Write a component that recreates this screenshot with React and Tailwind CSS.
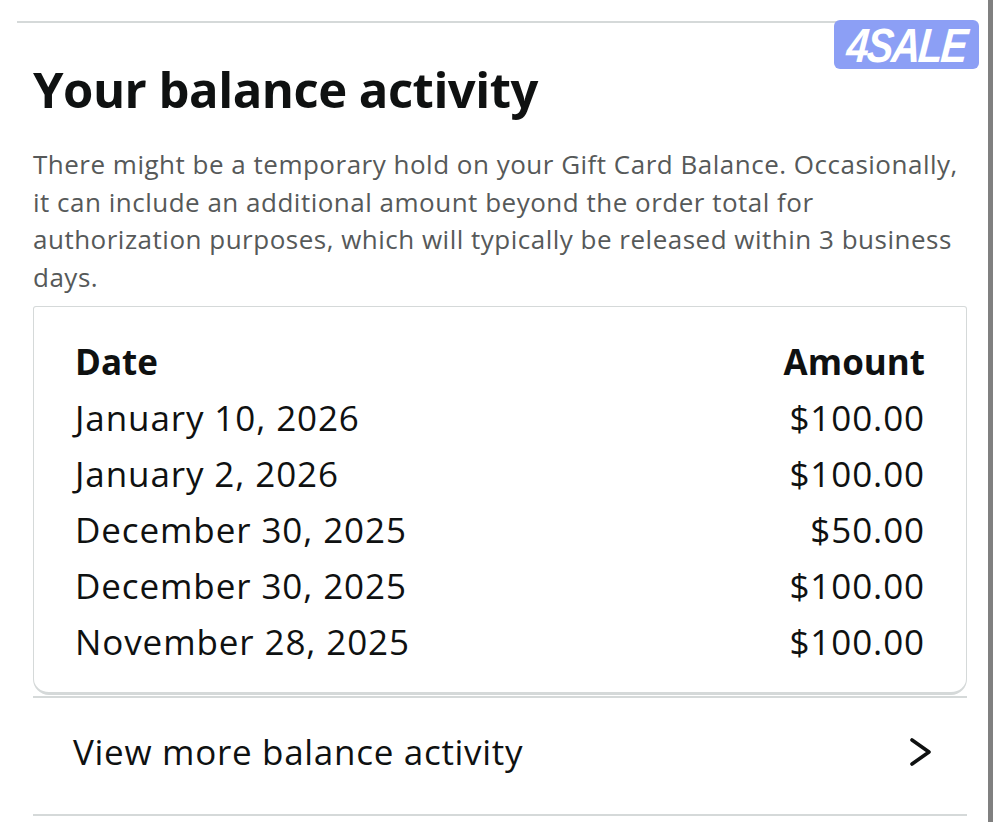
const rows = [
  { date: "January 10, 2026", amount: "$100.00" },
  { date: "January 2, 2026", amount: "$100.00" },
  { date: "December 30, 2025", amount: "$50.00" },
  { date: "December 30, 2025", amount: "$100.00" },
  { date: "November 28, 2025", amount: "$100.00" },
];

function SaleBadge() {
  return (
    <div className="absolute left-[834px] top-[20px] w-[145px] h-[49px] rounded-[6px] bg-[#8c9ff5] flex items-center justify-center">
      <span className="text-white text-[40px] font-black italic tracking-[-2px] leading-none [font-family:'Liberation_Sans',sans-serif] scale-y-[1.2] -skew-x-6">
        4SALE
      </span>
    </div>
  );
}

function Chevron() {
  return (
    <svg width="24" height="28" viewBox="0 0 24 28" fill="none">
      <polyline points="3,2 20,14 3,26" stroke="#0f1111" strokeWidth="3.6" strokeLinecap="round" strokeLinejoin="round" />
    </svg>
  );
}

export default function App() {
  return (
    <div className="relative w-[1000px] h-[822px] bg-white overflow-hidden flex [font-family:'Open_Sans',sans-serif]">
      <div className="w-[967px] pl-[17px] pt-[21px] flex flex-col">
        <div className="h-[2px] bg-[#d5d9d9]" />
        <div className="pl-[16px] flex flex-col">
          <h1 className="mt-[36px] text-[49px] leading-[60px] font-bold text-[#0f1111] tracking-[-0.5px]">
            Your balance activity
          </h1>
          <p className="mt-[27px] text-[26px] leading-[37.5px] tracking-[0.5px] text-[#565959]">
            There might be a temporary hold on your Gift Card Balance. Occasionally, it can include an additional amount beyond the order total for authorization purposes, which will typically be released within 3 business days.
          </p>
          <div className="mt-[10px] h-[389px] border border-[#d5d9d9] border-b-[3px] rounded-b-[16px] rounded-t-[3px] px-[41px] pt-[27px]">
            <div className="flex justify-between h-[56px] items-center text-[35px] font-bold text-[#0f1111]">
              <span>Date</span>
              <span>Amount</span>
            </div>
            {rows.map((r, i) => (
              <div key={i} className="flex justify-between h-[56px] items-center text-[35px] tracking-[0.9px] text-[#0f1111]">
                <span>{r.date}</span>
                <span>{r.amount}</span>
              </div>
            ))}
          </div>
          <div className="mt-[1px] h-[2px] bg-[#d5d9d9]" />
          <div className="h-[116px] pb-[8px] flex items-center justify-between pl-[40px] pr-[34px]">
            <span className="text-[35px] tracking-[0.7px] text-[#0f1111]">View more balance activity</span>
            <Chevron />
          </div>
          <div className="h-[2px] bg-[#d5d9d9]" />
        </div>
      </div>
      <div className="ml-[21px] w-[5px] h-full bg-[#808080]" />
      <SaleBadge />
    </div>
  );
}
